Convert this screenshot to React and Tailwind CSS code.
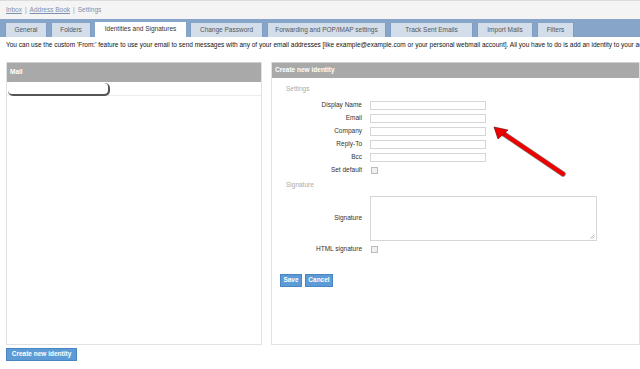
import React from "react";

const tabs = [
  ["General", 42],
  ["Folders", 40],
  ["Identities and Signatures", 91],
  ["Change Password", 73],
  ["Forwarding and POP/IMAP settings", 119],
  ["Track Sent Emails", 83],
  ["Import Mails", 56],
  ["Filters", 37],
];

function Row({ label, children, h = "h-[13px]" }) {
  return (
    <div className={`flex items-center ${h}`}>
      <div className="w-[90px] pr-0 text-right text-[#333]">{label}</div>
      <div className="ml-[8px] flex items-center">{children}</div>
    </div>
  );
}

function Input() {
  return <div className="w-[116px] h-[9px] border border-[#d6d6d6] bg-white" />;
}

function Check() {
  return <div className="w-[7px] h-[7px] border border-[#bbb] bg-[#f0f0f0] ml-[1px]" />;
}

export default function App() {
  return (
    <div
      className="relative w-[640px] h-[369px] overflow-hidden bg-white text-[6.5px] leading-none"
      style={{ fontFamily: '"Liberation Sans", Arial, sans-serif' }}
    >
      {/* breadcrumb */}
      <div className="h-[19px] bg-[#f4f4f4] border-t border-[#dcdcdc] flex items-center pl-[6px] text-[#7d8fae] gap-[3px]">
        <span className="underline">Inbox</span>
        <span className="text-[#999]">|</span>
        <span className="underline">Address Book</span>
        <span className="text-[#999]">|</span>
        <span>Settings</span>
      </div>
      {/* tabs */}
      <div className="h-[18px] bg-[#87a5c9] flex items-end pl-[5px] gap-[4px]">
        {tabs.map(([t, w], i) => (
          <div
            key={t}
            style={{ width: w }}
            className={
              i === 2
                ? "h-[15px] bg-white text-[#333] flex items-center justify-center"
                : "h-[14px] bg-[#d3deea] border-x border-[#7f9dc2] text-[#555] flex items-center justify-center"
            }
          >
            {t}
          </div>
        ))}
      </div>
      {/* description */}
      <div className="h-[25px] pl-[6px] pt-[5px] whitespace-nowrap overflow-hidden text-[#111]">
        You can use the custom 'From:' feature to use your email to send messages with any of your email addresses [like example@example.com or your personal webmail account]. All you have to do is add an identity to your account.
      </div>
      {/* panels */}
      <div className="flex pl-[6px] gap-[9px]">
        <div className="flex flex-col">
          <div className="w-[256px] h-[283px] border border-[#e2e2e2] border-t-0 flex flex-col">
            <div className="h-[20px] bg-[#a9a9a9] border-t border-[#d0d0d0] text-white font-bold flex items-center pl-[3px]">
              Mail
            </div>
            <div className="h-[14px] border-b border-[#ececec] flex items-center pl-[1px]">
              <div className="w-[100px] h-[11px] bg-white rounded-[4px] shadow-[1px_1px_0_1px_#555]" />
            </div>
          </div>
          <div className="mt-[3px] w-[71px] h-[13px] bg-[#5c9bd6] border border-[#4a87c2] text-white font-bold flex items-center justify-center">
            Create new identity
          </div>
        </div>
        <div className="w-[380px] h-[283px] border border-[#e2e2e2] border-t-0 flex flex-col">
          <div className="h-[16px] bg-[#a9a9a9] border-t border-[#d0d0d0] text-white font-bold flex items-center pl-[3px]">
            Create new identity
          </div>
          <div className="pl-[14px] h-[21px] flex items-center text-[#aaa] pt-[1px]">Settings</div>
          <div className="flex flex-col mt-[0px]">
            <Row label="Display Name"><Input /></Row>
            <Row label="Email"><Input /></Row>
            <Row label="Company"><Input /></Row>
            <Row label="Reply-To"><Input /></Row>
            <Row label="Bcc"><Input /></Row>
            <Row label="Set default"><Check /></Row>
          </div>
          <div className="pl-[14px] h-[17px] flex items-center text-[#aaa]">Signature</div>
          <div className="flex items-center h-[47px] mt-[1px]">
            <div className="w-[90px] text-right text-[#333]">Signature</div>
            <div className="ml-[8px] relative w-[227px] h-[45px] border border-[#d6d6d6]">
              <svg className="absolute right-[1px] bottom-[1px]" width="5" height="5" viewBox="0 0 5 5">
                <path d="M4.5 0.5 L0.5 4.5 M4.5 2.5 L2.5 4.5" stroke="#999" strokeWidth="0.7" />
              </svg>
            </div>
          </div>
          <div className="mt-[2px]">
            <Row label="HTML signature" h="h-[11px]"><Check /></Row>
          </div>
          <div className="flex gap-[3px] pl-[8px] mt-[19px]">
            <div className="w-[22px] h-[13px] bg-[#5c9bd6] border border-[#4a87c2] text-white font-bold flex items-center justify-center">
              Save
            </div>
            <div className="w-[28px] h-[13px] bg-[#5c9bd6] border border-[#4a87c2] text-white font-bold flex items-center justify-center">
              Cancel
            </div>
          </div>
        </div>
      </div>
      {/* red arrow annotation */}
      <svg className="absolute left-0 top-0 pointer-events-none" width="640" height="369">
        <line x1="563" y1="174" x2="501" y2="132" stroke="#333" strokeWidth="5.5" strokeLinecap="round" opacity="0.6" />
        <line x1="563" y1="174" x2="501" y2="132" stroke="#ee0000" strokeWidth="4" strokeLinecap="round" />
        <polygon points="494,127 508,130 498,139" fill="#ee0000" stroke="#600" strokeWidth="0.6" strokeLinejoin="round" />
      </svg>
    </div>
  );
}
